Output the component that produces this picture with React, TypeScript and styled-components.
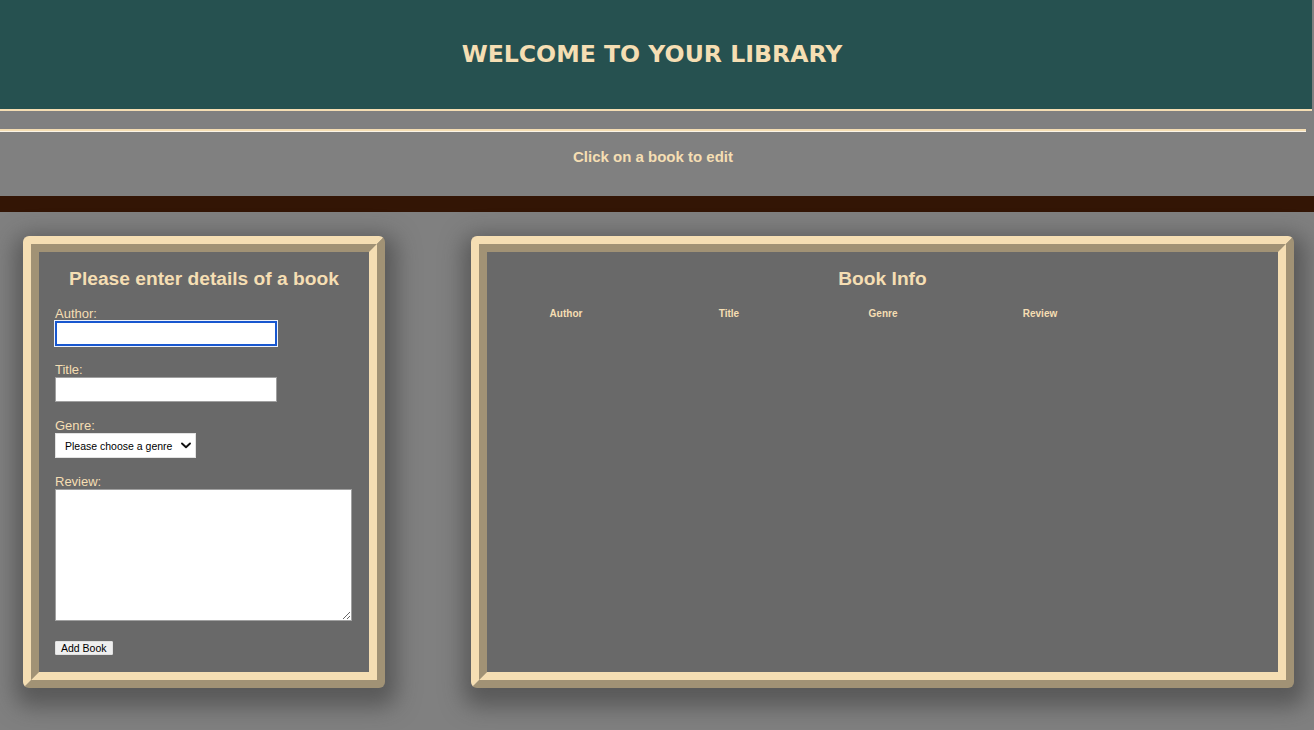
import React from "react";
import styled, { createGlobalStyle } from "styled-components";

const WHEAT = "#f5deb3";

const GlobalStyle = createGlobalStyle`
  html, body {
    margin: 0;
    padding: 0;
  }
  body {
    background: #808080;
    font-family: "Liberation Sans", Arial, Helvetica, sans-serif;
    min-height: 100vh;
  }
  * { box-sizing: border-box; }
`;

const Page = styled.div`
  display: flex;
  flex-direction: column;
  min-height: 100vh;
  background: #808080;
`;

const Header = styled.header`
  height: 111px;
  margin-right: 2px;
  padding-right: 8px;
  background: #265150;
  border-bottom: 2px solid ${WHEAT};
  display: flex;
  align-items: center;
  justify-content: center;
`;

const SiteTitle = styled.h1`
  margin: 0;
  font-family: "DejaVu Sans", Tahoma, Verdana, sans-serif;
  font-weight: bold;
  font-size: 23.6px;
  color: ${WHEAT};
  padding-bottom: 1px;
`;

const SubBar = styled.div`
  height: 85px;
  padding: 18px 8px 0 0;
  display: flex;
  flex-direction: column;
  align-items: center;
`;

const Rule = styled.div`
  align-self: stretch;
  height: 3px;
  border-top: 2px solid ${WHEAT};
  border-bottom: 1px solid #fbf4e6;
`;

const Hint = styled.p`
  margin: 16px 0 0;
  font-size: 15px;
  font-weight: bold;
  line-height: 17px;
  color: ${WHEAT};
`;

const Divider = styled.div`
  height: 16px;
  background: #331505;
`;

const Main = styled.main`
  display: flex;
  align-items: stretch;
  gap: 86px;
  padding: 24px 20px 0 23px;
`;

const Panel = styled.section<{ $width?: number }>`
  ${(p) => (p.$width ? `width: ${p.$width}px; flex: none;` : "flex: 1;")}
  background: #696969;
  border: 16px ridge ${WHEAT};
  border-radius: 6px;
  box-shadow: 2px 9px 22px 10px rgba(50, 50, 50, 0.5);
  display: flex;
  flex-direction: column;
`;

const FormPanelBody = styled.form`
  display: flex;
  flex-direction: column;
  align-items: flex-start;
  padding: 16px 16px 17px;
`;

const PanelTitle = styled.h3`
  align-self: stretch;
  margin: 0;
  font-size: 19.2px;
  line-height: 22px;
  font-weight: bold;
  text-align: center;
  color: ${WHEAT};
`;

const Field = styled.div<{ $first?: boolean }>`
  display: flex;
  flex-direction: column;
  align-items: flex-start;
  margin-top: 16px;
`;

const Label = styled.label`
  font-size: 13px;
  line-height: 15px;
  color: ${WHEAT};
`;

const TextInput = styled.input<{ $focused?: boolean }>`
  width: 222px;
  height: 25px;
  margin: 0;
  padding: 2px 4px;
  background: #fff;
  border: 1px solid #a0a0a0;
  font-size: 13px;
  font-family: inherit;
  ${(p) =>
    p.$focused
      ? `border: 2px solid #1857cf; box-shadow: 0 0 0 1px #eef2fa; outline: none;`
      : ""}
`;

const SelectWrap = styled.div`
  position: relative;
  width: 141px;
  height: 25px;
`;

const Select = styled.select`
  appearance: none;
  -webkit-appearance: none;
  width: 100%;
  height: 100%;
  margin: 0;
  padding: 0 0 0 9px;
  background: #fff;
  border: 1px solid #e2e2e2;
  border-radius: 0;
  font-family: inherit;
  font-size: 10.5px;
  color: #000;
`;

const Chevron = styled.svg`
  position: absolute;
  right: 5px;
  top: 9px;
  width: 10px;
  height: 7px;
  pointer-events: none;
`;

const TextArea = styled.textarea`
  width: 297px;
  height: 132px;
  margin: 0;
  background: #fff;
  border: 1px solid #a0a0a0;
  resize: both;
  font-family: inherit;
`;

const AddButton = styled.button`
  margin-top: 20px;
  height: 14px;
  padding: 0 5px;
  background: #efefef;
  border: 1px solid #e0e0e0;
  border-radius: 1px;
  font-family: inherit;
  font-size: 10.5px;
  line-height: 12px;
  color: #000;
`;

const InfoBody = styled.div`
  display: flex;
  flex-direction: column;
  align-items: flex-start;
  padding: 16px 0 0;
`;

const BookTable = styled.table`
  margin-top: 15px;
  border-spacing: 2px;
  table-layout: fixed;
  width: 640px;
`;

const HeadCell = styled.th<{ $w: number }>`
  width: ${(p) => p.$w}px;
  padding: 1px;
  font-size: 10px;
  line-height: 11.5px;
  font-weight: bold;
  text-align: center;
  color: ${WHEAT};
`;

const columns: { label: string; w: number }[] = [
  { label: "Author", w: 154 },
  { label: "Title", w: 168 },
  { label: "Genre", w: 136 },
  { label: "Review", w: 174 },
];

export default function App() {
  return (
    <>
      <GlobalStyle />
      <Page>
        <Header>
          <SiteTitle>WELCOME TO YOUR LIBRARY</SiteTitle>
        </Header>
        <SubBar>
          <Rule />
          <Hint>Click on a book to edit</Hint>
        </SubBar>
        <Divider />
        <Main>
          <Panel $width={362}>
            <FormPanelBody onSubmit={(e) => e.preventDefault()}>
              <PanelTitle>Please enter details of a book</PanelTitle>
              <Field>
                <Label htmlFor="author">Author:</Label>
                <TextInput id="author" type="text" $focused />
              </Field>
              <Field>
                <Label htmlFor="title">Title:</Label>
                <TextInput id="title" type="text" />
              </Field>
              <Field>
                <Label htmlFor="genre">Genre:</Label>
                <SelectWrap>
                  <Select id="genre" defaultValue="">
                    <option value="">Please choose a genre</option>
                    <option value="fiction">Fiction</option>
                    <option value="non-fiction">Non-fiction</option>
                  </Select>
                  <Chevron viewBox="0 0 10 7">
                    <path
                      d="M1 1.5 L5 5.2 L9 1.5"
                      fill="none"
                      stroke="#111"
                      strokeWidth="1.9"
                      strokeLinecap="round"
                      strokeLinejoin="round"
                    />
                  </Chevron>
                </SelectWrap>
              </Field>
              <Field>
                <Label htmlFor="review">Review:</Label>
                <TextArea id="review" />
              </Field>
              <AddButton type="submit">Add Book</AddButton>
            </FormPanelBody>
          </Panel>
          <Panel>
            <InfoBody>
              <PanelTitle>Book Info</PanelTitle>
              <BookTable>
                <thead>
                  <tr>
                    {columns.map((c) => (
                      <HeadCell key={c.label} $w={c.w}>
                        {c.label}
                      </HeadCell>
                    ))}
                  </tr>
                </thead>
                <tbody />
              </BookTable>
            </InfoBody>
          </Panel>
        </Main>
      </Page>
    </>
  );
}
